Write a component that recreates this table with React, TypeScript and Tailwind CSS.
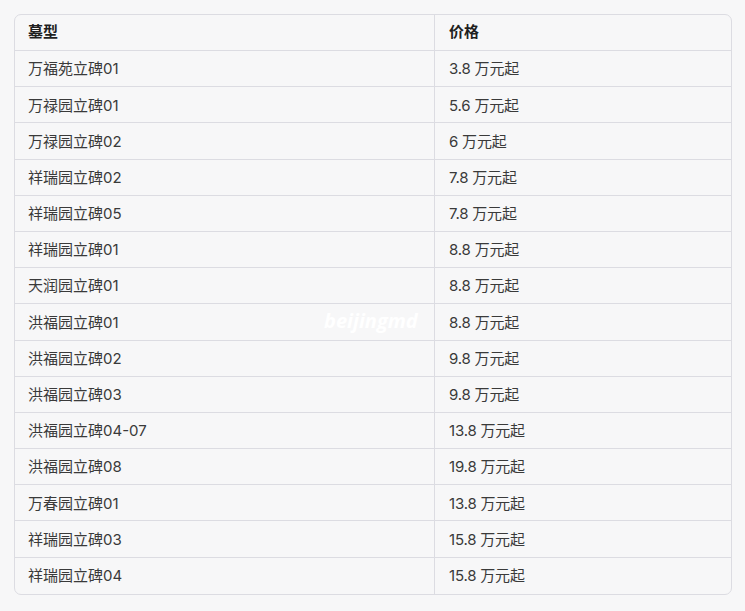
const rows: [string, string][] = [
  ["万福苑立碑01", "3.8 万元起"],
  ["万禄园立碑01", "5.6 万元起"],
  ["万禄园立碑02", "6 万元起"],
  ["祥瑞园立碑02", "7.8 万元起"],
  ["祥瑞园立碑05", "7.8 万元起"],
  ["祥瑞园立碑01", "8.8 万元起"],
  ["天润园立碑01", "8.8 万元起"],
  ["洪福园立碑01", "8.8 万元起"],
  ["洪福园立碑02", "9.8 万元起"],
  ["洪福园立碑03", "9.8 万元起"],
  ["洪福园立碑04-07", "13.8 万元起"],
  ["洪福园立碑08", "19.8 万元起"],
  ["万春园立碑01", "13.8 万元起"],
  ["祥瑞园立碑03", "15.8 万元起"],
  ["祥瑞园立碑04", "15.8 万元起"],
];

export default function App() {
  return (
    <div
      className="relative w-[745px] h-[611px] bg-[#f7f7f8] pt-[14px] pl-[14px]"
      style={{ fontFamily: 'Inter, "Noto Sans CJK SC", sans-serif' }}
    >
      <div className="w-[718px] border border-[#dcdce2] rounded-[7px] overflow-hidden">
        <div className="flex h-[36px] border-b border-[#dcdce2] text-[15px] font-bold text-[#1f1f1f]">
          <div className="w-[420px] border-r border-[#dcdce2] pl-[13px] flex items-center">墓型</div>
          <div className="flex-1 pl-[14px] flex items-center">价格</div>
        </div>
        {rows.map(([name, price], i) => (
          <div
            key={i}
            className={
              "flex h-[36.2px] text-[15px] text-[#3a3a3a] " +
              (i < rows.length - 1 ? "border-b border-[#dcdce2]" : "")
            }
          >
            <div className="w-[420px] border-r border-[#dcdce2] pl-[13px] pt-[2px] flex items-center">{name}</div>
            <div className="flex-1 pl-[14px] pt-[2px] flex items-center tracking-[-0.2px]">{price}</div>
          </div>
        ))}
      </div>
      <div
        className="absolute left-[324px] top-[306px] text-white font-bold italic text-[20px]"
        style={{ fontFamily: '"Open Sans", sans-serif' }}
      >
        beijingmd
      </div>
    </div>
  );
}
